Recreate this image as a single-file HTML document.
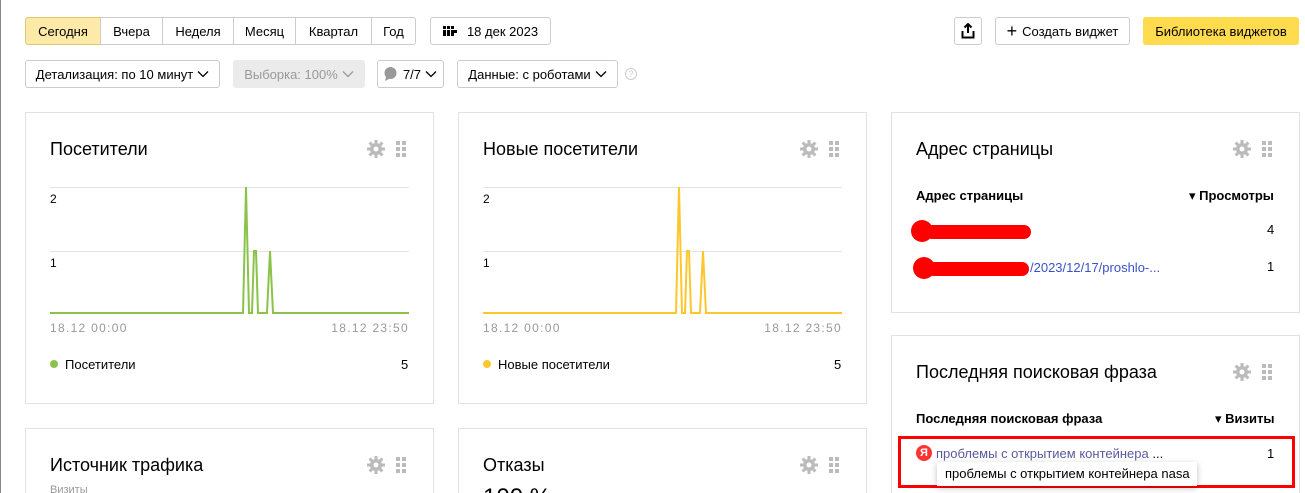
<!DOCTYPE html>
<html style="height:493px;overflow:hidden"><head><meta charset="utf-8"><style>
*{box-sizing:border-box}
html,body{margin:0;width:1305px;height:493px;overflow:hidden}
body{background:#fff;font-family:"Liberation Sans","DejaVu Sans",sans-serif;font-size:13px;color:#000;position:relative}
.abs{position:absolute}
.btn{position:absolute;height:28px;border:1px solid #ccc;border-radius:3px;background:#fff;display:flex;align-items:center;justify-content:center;font-size:13px;white-space:nowrap}
.seg{position:absolute;top:17px;height:28px;border:1px solid #ccc;display:flex;align-items:center;justify-content:center;font-size:13px;background:#fff}
.card{position:absolute;border:1px solid #e2e2e2;background:#fff}
.ttl{position:absolute;font-size:18px}
.ax{position:absolute;font-size:12px;color:#999;letter-spacing:1.3px}
.num{position:absolute;font-size:12px}
.leg{position:absolute;font-size:13px}
.dot{display:inline-block;width:8px;height:8px;border-radius:50%;margin-right:7px;vertical-align:1px}
</style></head><body>
<div class="abs" style="left:0;top:0;width:1px;height:493px;background:#888"></div>
<div class="seg" style="left:25px;width:76px;background:#fdeaa8;border-color:#e0c870;border-radius:3px 0 0 3px">Сегодня</div>
<div class="seg" style="left:100px;width:63px">Вчера</div>
<div class="seg" style="left:162px;width:72px">Неделя</div>
<div class="seg" style="left:233px;width:63px">Месяц</div>
<div class="seg" style="left:295px;width:77px">Квартал</div>
<div class="seg" style="left:371px;width:45px;border-radius:0 3px 3px 0">Год</div>
<div class="btn" style="left:430px;top:17px;width:121px"><svg width="14" height="10" style="margin-right:10px"><g fill="#000"><rect x="0" y="0" width="3" height="3"/><rect x="4" y="0" width="3" height="3"/><rect x="8" y="0" width="3" height="3"/><rect x="0" y="4" width="3" height="3"/><rect x="4" y="4" width="3" height="3"/><rect x="8" y="4" width="3" height="3"/><rect x="11" y="4" width="3" height="3"/><rect x="0" y="7" width="3" height="3"/><rect x="4" y="7" width="3" height="3"/><rect x="8" y="7" width="3" height="3"/></g></svg>18 дек 2023</div>
<div class="btn" style="left:954px;top:17px;width:28px"><svg width="14" height="16" viewBox="0 0 14 16"><path d="M7 1v9M3.5 4.5L7 1l3.5 3.5M1.5 8v6.5h11V8" fill="none" stroke="#000" stroke-width="2"/></svg></div>
<div class="btn" style="left:995px;top:17px;width:135px"><span style="font-size:18px;margin-right:5px;line-height:1">+</span>Создать виджет</div>
<div class="btn" style="left:1143px;top:17px;width:156px;background:#ffdb4d;border-color:#ffdb4d">Библиотека виджетов</div>

<div class="btn" style="left:25px;top:60px;width:195px">Детализация: по 10 минут<svg width="12" height="8" style="margin-left:4px"><path d="M1 1.5l5 5 5-5" fill="none" stroke="#000" stroke-width="1.3"/></svg></div>
<div class="btn" style="left:233px;top:60px;width:132px;background:#ebebeb;border-color:#ebebeb;color:#999">Выборка: 100%<svg width="12" height="8" style="margin-left:4px"><path d="M1 1.5l5 5 5-5" fill="none" stroke="#999" stroke-width="1.3"/></svg></div>
<div class="btn" style="left:377px;top:60px;width:67px"><svg width="13" height="14" style="margin-right:6px"><ellipse cx="6.5" cy="6" rx="6" ry="6" fill="#999"/><path d="M2 10l-1 4 4-2z" fill="#999"/></svg>7/7<svg width="12" height="8" style="margin-left:4px"><path d="M1 1.5l5 5 5-5" fill="none" stroke="#000" stroke-width="1.3"/></svg></div>
<div class="btn" style="left:457px;top:60px;width:161px">Данные: с роботами<svg width="12" height="8" style="margin-left:4px"><path d="M1 1.5l5 5 5-5" fill="none" stroke="#000" stroke-width="1.3"/></svg></div>
<div class="abs" style="left:625px;top:68px;width:12px;height:12px;border:1px solid #ccc;border-radius:50%;font-size:9px;color:#ccc;text-align:center;line-height:10px">?</div>

<!-- card 1 -->
<div class="card" style="left:25px;top:112px;width:409px;height:292px"></div>
<div class="ttl" style="left:50px;top:139px">Посетители</div>
<svg class="abs" style="left:366px;top:139px" width="44" height="20"><g fill="#bbb"><circle cx="10" cy="10" r="6"/><g stroke="#bbb" stroke-width="3"><path d="M10 1v18M1 10h18M3.6 3.6l12.8 12.8M16.4 3.6L3.6 16.4"/></g><circle cx="10" cy="10" r="2.5" fill="#fff"/><rect x="30" y="2" width="4" height="4"/><rect x="36" y="2" width="4" height="4"/><rect x="30" y="8" width="4" height="4"/><rect x="36" y="8" width="4" height="4"/><rect x="30" y="14" width="4" height="4"/><rect x="36" y="14" width="4" height="4"/></g></svg>
<svg class="abs" style="left:50px;top:185px" width="359" height="132"><path d="M0 2.5H359M0 66.5H359" stroke="#e4e4e4"/><polyline points="0,128 193,128 196,2 199,128 202,128 204,66 206,66 208,128 217,128 220,66 223,128 359,128" fill="none" stroke="#8bc34a" stroke-width="2"/></svg>
<div class="num" style="left:50px;top:192px">2</div><div class="num" style="left:50px;top:256px">1</div>
<div class="ax" style="left:50px;top:321px">18.12 00:00</div><div class="ax" style="right:896px;top:321px">18.12 23:50</div>
<div class="leg" style="left:50px;top:357px"><span class="dot" style="background:#8bc34a"></span>Посетители</div>
<div class="leg" style="left:401px;top:357px">5</div>

<!-- card 2 -->
<div class="card" style="left:458px;top:112px;width:409px;height:292px"></div>
<div class="ttl" style="left:483px;top:139px">Новые посетители</div>
<svg class="abs" style="left:799px;top:139px" width="44" height="20"><g fill="#bbb"><circle cx="10" cy="10" r="6"/><g stroke="#bbb" stroke-width="3"><path d="M10 1v18M1 10h18M3.6 3.6l12.8 12.8M16.4 3.6L3.6 16.4"/></g><circle cx="10" cy="10" r="2.5" fill="#fff"/><rect x="30" y="2" width="4" height="4"/><rect x="36" y="2" width="4" height="4"/><rect x="30" y="8" width="4" height="4"/><rect x="36" y="8" width="4" height="4"/><rect x="30" y="14" width="4" height="4"/><rect x="36" y="14" width="4" height="4"/></g></svg>
<svg class="abs" style="left:483px;top:185px" width="359" height="132"><path d="M0 2.5H359M0 66.5H359" stroke="#e4e4e4"/><polyline points="0,128 193,128 196,2 199,128 202,128 204,66 206,66 208,128 217,128 220,66 223,128 359,128" fill="none" stroke="#fcc72c" stroke-width="2"/></svg>
<div class="num" style="left:483px;top:192px">2</div><div class="num" style="left:483px;top:256px">1</div>
<div class="ax" style="left:483px;top:321px">18.12 00:00</div><div class="ax" style="right:463px;top:321px">18.12 23:50</div>
<div class="leg" style="left:483px;top:357px"><span class="dot" style="background:#fcc72c"></span>Новые посетители</div>
<div class="leg" style="left:834px;top:357px">5</div>

<!-- card 3 -->
<div class="card" style="left:891px;top:112px;width:409px;height:201px"></div>
<div class="ttl" style="left:916px;top:139px">Адрес страницы</div>
<svg class="abs" style="left:1232px;top:139px" width="44" height="20"><g fill="#bbb"><circle cx="10" cy="10" r="6"/><g stroke="#bbb" stroke-width="3"><path d="M10 1v18M1 10h18M3.6 3.6l12.8 12.8M16.4 3.6L3.6 16.4"/></g><circle cx="10" cy="10" r="2.5" fill="#fff"/><rect x="30" y="2" width="4" height="4"/><rect x="36" y="2" width="4" height="4"/><rect x="30" y="8" width="4" height="4"/><rect x="36" y="8" width="4" height="4"/><rect x="30" y="14" width="4" height="4"/><rect x="36" y="14" width="4" height="4"/></g></svg>
<div class="abs" style="left:916px;top:188px;font-weight:bold;font-size:13px">Адрес страницы</div>
<div class="abs" style="left:1189px;top:188px;font-weight:bold;font-size:13px">▾ Просмотры</div>
<div class="abs" style="left:911px;top:220px;width:22px;height:22px;border-radius:50%;background:#f00"></div>
<div class="abs" style="left:925px;top:225px;width:106px;height:14px;border-radius:7px;background:#f00"></div>
<div class="abs" style="left:1267px;top:222px">4</div>
<div class="abs" style="left:913px;top:257px;width:22px;height:22px;border-radius:50%;background:#f00"></div>
<div class="abs" style="left:927px;top:262px;width:102px;height:14px;border-radius:7px;background:#f00"></div>
<div class="abs" style="left:1030px;top:260px;color:#3a52c8">/2023/12/17/proshlo-...</div>
<div class="abs" style="left:1267px;top:259px">1</div>

<!-- card 4 -->
<div class="card" style="left:891px;top:335px;width:409px;height:170px"></div>
<div class="ttl" style="left:916px;top:362px">Последняя поисковая фраза</div>
<svg class="abs" style="left:1232px;top:362px" width="44" height="20"><g fill="#bbb"><circle cx="10" cy="10" r="6"/><g stroke="#bbb" stroke-width="3"><path d="M10 1v18M1 10h18M3.6 3.6l12.8 12.8M16.4 3.6L3.6 16.4"/></g><circle cx="10" cy="10" r="2.5" fill="#fff"/><rect x="30" y="2" width="4" height="4"/><rect x="36" y="2" width="4" height="4"/><rect x="30" y="8" width="4" height="4"/><rect x="36" y="8" width="4" height="4"/><rect x="30" y="14" width="4" height="4"/><rect x="36" y="14" width="4" height="4"/></g></svg>
<div class="abs" style="left:916px;top:411px;font-weight:bold">Последняя поисковая фраза</div>
<div class="abs" style="left:1215px;top:411px;font-weight:bold">▾ Визиты</div>
<div class="abs" style="left:898px;top:436px;width:397px;height:52px;border:3px solid #f00"></div>
<div class="abs" style="left:916px;top:445px;width:16px;height:16px;border-radius:50%;background:#f33;color:#fff;font-size:11px;font-weight:bold;text-align:center;line-height:16px">Я</div>
<div class="abs" style="left:936px;top:446px;color:#5a5aa0">проблемы с открытием контейнера <span style="color:#000">...</span></div>
<div class="abs" style="left:1267px;top:446px">1</div>
<div class="abs" style="left:937px;top:462px;width:260px;height:24px;background:#fff;box-shadow:0 2px 6px rgba(0,0,0,.25);padding:4px 8px;font-size:13px;white-space:nowrap">проблемы с открытием контейнера nasa</div>

<!-- bottom cards -->
<div class="card" style="left:25px;top:428px;width:409px;height:80px"></div>
<div class="ttl" style="left:50px;top:455px">Источник трафика</div>
<svg class="abs" style="left:366px;top:455px" width="44" height="20"><g fill="#bbb"><circle cx="10" cy="10" r="6"/><g stroke="#bbb" stroke-width="3"><path d="M10 1v18M1 10h18M3.6 3.6l12.8 12.8M16.4 3.6L3.6 16.4"/></g><circle cx="10" cy="10" r="2.5" fill="#fff"/><rect x="30" y="2" width="4" height="4"/><rect x="36" y="2" width="4" height="4"/><rect x="30" y="8" width="4" height="4"/><rect x="36" y="8" width="4" height="4"/><rect x="30" y="14" width="4" height="4"/><rect x="36" y="14" width="4" height="4"/></g></svg>
<div class="abs" style="left:50px;top:484px;font-size:11px;color:#999">Визиты</div>
<div class="card" style="left:458px;top:428px;width:409px;height:80px"></div>
<div class="ttl" style="left:483px;top:455px">Отказы</div>
<svg class="abs" style="left:799px;top:455px" width="44" height="20"><g fill="#bbb"><circle cx="10" cy="10" r="6"/><g stroke="#bbb" stroke-width="3"><path d="M10 1v18M1 10h18M3.6 3.6l12.8 12.8M16.4 3.6L3.6 16.4"/></g><circle cx="10" cy="10" r="2.5" fill="#fff"/><rect x="30" y="2" width="4" height="4"/><rect x="36" y="2" width="4" height="4"/><rect x="30" y="8" width="4" height="4"/><rect x="36" y="8" width="4" height="4"/><rect x="30" y="14" width="4" height="4"/><rect x="36" y="14" width="4" height="4"/></g></svg>
<div class="abs" style="left:483px;top:484px;font-size:24px">100 %</div>
</body></html>
